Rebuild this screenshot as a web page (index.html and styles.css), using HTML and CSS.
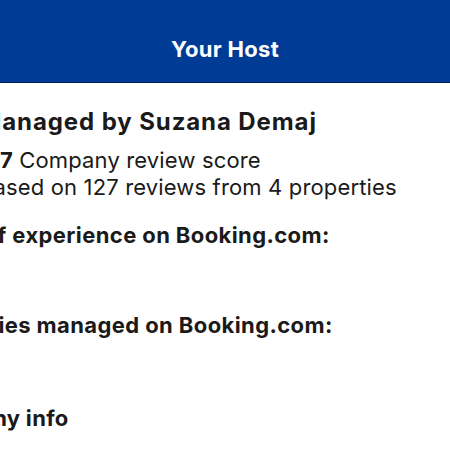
FILE: index.html
```html
<!DOCTYPE html>
<html lang="en">
<head>
<meta charset="utf-8">
<title>Your Host</title>
<link rel="stylesheet" href="styles.css">
</head>
<body>
<header class="topbar">
  <h1 class="topbar-title">Your Host</h1>
</header>
<main class="content">
  <div class="host">
    <div class="avatar" aria-hidden="true"></div>
    <div class="host-text">
      <h2 class="host-name">Managed by Suzana Demaj</h2>
      <p class="line"><strong>8.7</strong> Company review score</p>
      <p class="line">Based on 127 reviews from 4 properties</p>
    </div>
  </div>
  <section class="fact">
    <h3 class="fact-label">Years of experience on Booking.com:</h3>
    <p class="fact-value"></p>
  </section>
  <section class="fact">
    <h3 class="fact-label">Properties managed on Booking.com:</h3>
    <p class="fact-value"></p>
  </section>
  <h2 class="company">Company info</h2>
</main>
</body>
</html>
```

FILE: styles.css
```css
* { box-sizing: border-box; }
html, body {
  margin: 0;
  padding: 0;
  background: #ffffff;
  overflow: hidden;
}
body {
  font-family: Inter, "Noto Sans", "Liberation Sans", sans-serif;
  color: #1a1a1a;
  width: 450px;
  height: 450px;
}
.topbar {
  height: 83px;
  background: #003b95;
  border-bottom: 1px solid #00204f;
  display: flex;
  justify-content: center;
  align-items: flex-start;
  padding-top: 35px;
}
.topbar-title {
  margin: 0;
  color: #ffffff;
  font-size: 22px;
  font-weight: 700;
  letter-spacing: 0.3px;
  line-height: 28px;
}
.content {
  margin-left: -85px;
  padding-top: 24px;
  white-space: nowrap;
}
.host {
  display: flex;
  gap: 16px;
}
.avatar {
  width: 48px;
  height: 48px;
  border-radius: 50%;
  background: #e7e7e7;
  flex: none;
}
.host-name {
  margin: 0 0 11px;
  font-size: 24px;
  font-weight: 700;
  letter-spacing: 0.9px;
  line-height: 29px;
}
.line {
  margin: 0;
  font-size: 22px;
  letter-spacing: 0.15px;
  line-height: 27px;
}
.line strong { font-weight: 700; }
.fact { margin-top: 21px; }
.fact + .fact { margin-top: 0; }
.fact-label {
  margin: 0;
  font-size: 22px;
  font-weight: 700;
  letter-spacing: 0.4px;
  line-height: 27px;
}
.fact-value {
  margin: 0;
  height: 63px;
}
.company {
  margin: 3px 0 0;
  font-size: 22px;
  font-weight: 700;
  letter-spacing: 0.3px;
  line-height: 27px;
}
```
